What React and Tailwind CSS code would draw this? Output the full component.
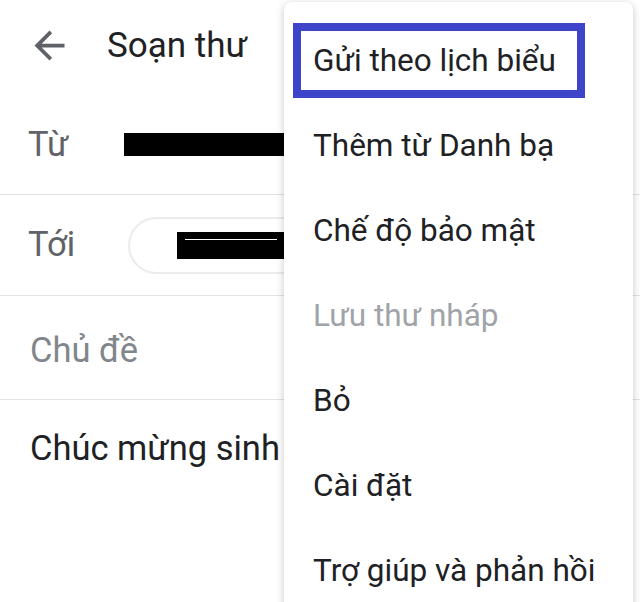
import React from "react";

const MENU_ITEMS = [
  { label: "Gửi theo lịch biểu", highlighted: true },
  { label: "Thêm từ Danh bạ" },
  { label: "Chế độ bảo mật" },
  { label: "Lưu thư nháp", disabled: true },
  { label: "Bỏ" },
  { label: "Cài đặt" },
  { label: "Trợ giúp và phản hồi" },
];

export default function App() {
  return (
    <div
      className="relative w-[640px] h-[602px] overflow-hidden bg-white text-[#202124]"
      style={{ fontFamily: "Roboto, 'Noto Sans', sans-serif" }}
    >
      {/* ── Compose screen ─────────────────────────────── */}
      <header className="h-[90px] flex items-center">
        <svg
          viewBox="0 0 24 24"
          className="w-[45px] h-[45px] ml-[27px] fill-[#5f6368]"
        >
          <path d="M20 11H7.83l5.59-5.59L12 4l-8 8 8 8 1.41-1.41L7.83 13H20v-2z" />
        </svg>
        <h1 className="ml-[35px] text-[35px] leading-none">Soạn thư</h1>
      </header>

      <div className="h-[105px] flex items-center pt-[4px] border-b border-[#e3e3e3]">
        <span className="ml-[28px] w-[96px] text-[34.5px] leading-none text-[#5f6368]">Từ</span>
        <span className="block w-[160px] h-[23px] bg-black" />
      </div>

      <div className="h-[101px] flex items-center pb-[2px] border-b border-[#e3e3e3]">
        <span className="ml-[28px] w-[100px] text-[34.5px] leading-none text-[#5f6368]">Tới</span>
        <div className="w-[260px] h-[57px] mt-[2px] rounded-full border-2 border-[#ececec] flex items-center pl-[47px]">
          <div className="w-[110px] h-[27px] bg-black flex items-start pt-[7px] pl-[8px]">
            <span className="block w-[92px] h-[1px] bg-white" />
          </div>
        </div>
      </div>

      <div className="h-[104px] flex items-center pt-[5px] border-b border-[#e3e3e3]">
        <span className="ml-[30px] text-[34.5px] leading-none text-[#80868b]">Chủ đề</span>
      </div>

      <p className="pl-[30px] pt-[31px] text-[34.5px] leading-none">Chúc mừng sinh nhật</p>

      {/* ── Overflow menu ──────────────────────────────── */}
      <div className="absolute left-[284px] top-[2px] w-[349px] h-[640px] bg-white rounded-lg shadow-[0_2px_8px_rgba(0,0,0,0.22)] pt-[16px]">
        {MENU_ITEMS.map((item) => (
          <div key={item.label} className="h-[85px] flex items-center">
            {item.highlighted ? (
              <div className="ml-[9px] w-[292px] h-[75px] border-[8px] border-[#3d44c9] flex items-center pl-[12px]">
                <span className="text-[31.5px] leading-none">{item.label}</span>
              </div>
            ) : (
              <span
                className={`ml-[29px] text-[31.5px] leading-none ${
                  item.disabled ? "text-[#a0a4a8]" : "text-[#202124]"
                }`}
              >
                {item.label}
              </span>
            )}
          </div>
        ))}
      </div>
    </div>
  );
}
